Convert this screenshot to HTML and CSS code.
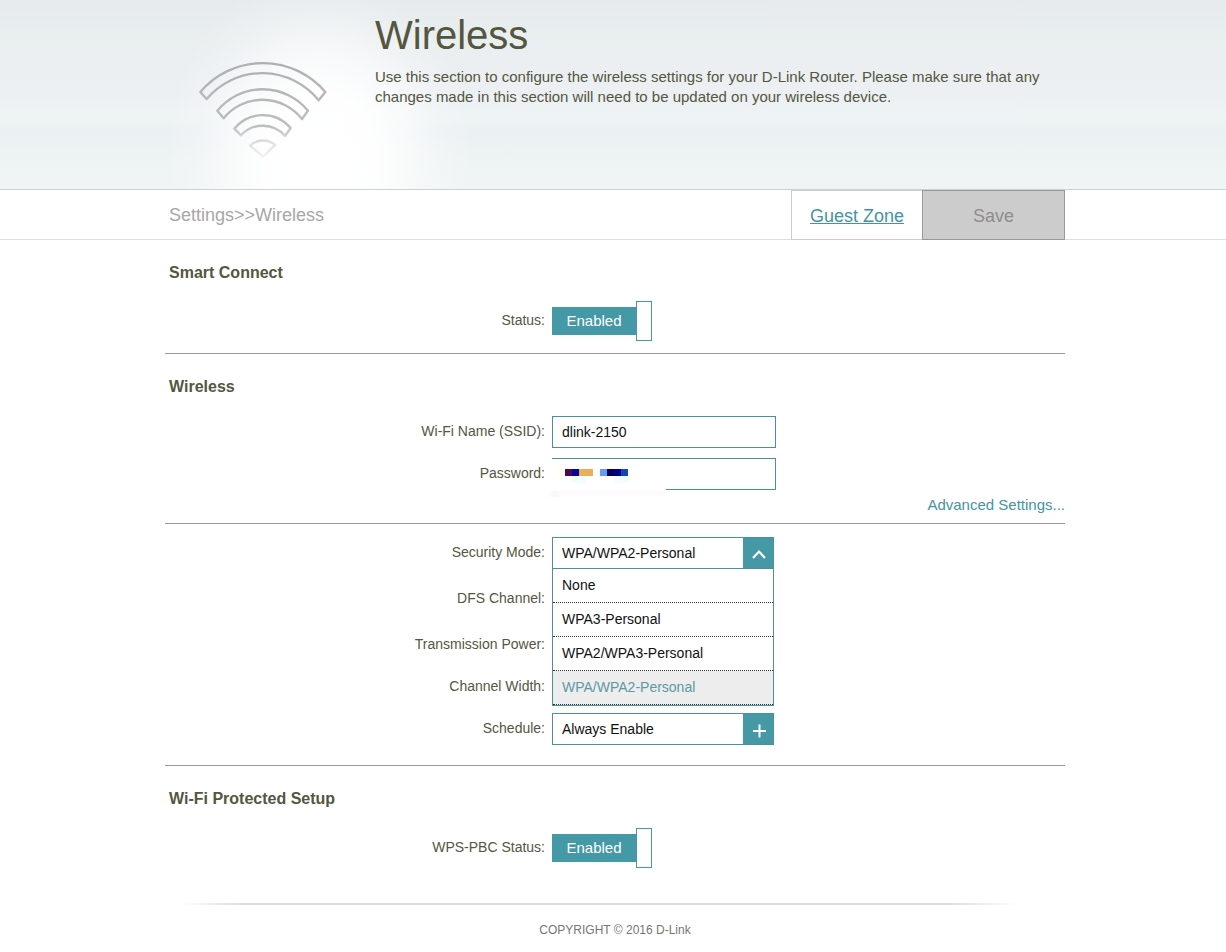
FILE: index.html
```html
<!DOCTYPE html>
<html lang="en">
<head>
<meta charset="utf-8">
<meta name="viewport" content="width=device-width, initial-scale=1">
<title>Wireless</title>
<link rel="stylesheet" href="styles.css">
</head>
<body>
<header class="banner">
  <div class="wrap banner-inner">
    <div class="banner-icon">
      <svg class="wifi" viewBox="0 0 510 360" aria-hidden="true">
        <defs>
          <linearGradient id="fade" gradientUnits="userSpaceOnUse" x1="0" y1="40" x2="0" y2="325">
            <stop offset="0" stop-color="#b0b0b2"/>
            <stop offset="0.65" stop-color="#bcbcbc"/>
            <stop offset="0.82" stop-color="#dcdcdc"/>
            <stop offset="1" stop-color="#f4f4f4"/>
          </linearGradient>
        </defs>
        <g fill="none" stroke="url(#fade)" stroke-width="7" stroke-linejoin="round">
          <path d="M61 126A246 246 0 0 1 436 126L416 151A217 217 0 0 0 80 147Z"/>
          <path d="M112 182A176 176 0 0 1 384 182L366 207A150 150 0 0 0 131 205Z"/>
          <path d="M163 236A110 110 0 0 1 332 234L315 258A88 88 0 0 0 183 256Z"/>
          <path d="M210 287A56 56 0 0 1 285 285L250 320Z"/>
        </g>
      </svg>
    </div>
    <div class="banner-text">
      <h1>Wireless</h1>
      <p>Use this section to configure the wireless settings for your D-Link Router. Please make sure that any changes made in this section will need to be updated on your wireless device.</p>
    </div>
  </div>
</header>

<nav class="toolbar">
  <div class="wrap toolbar-inner">
    <span class="crumbs">Settings&gt;&gt;Wireless</span>
    <a class="guest" href="#guest">Guest Zone</a>
    <button class="save" type="button" disabled>Save</button>
  </div>
</nav>

<main class="wrap">
  <section class="group">
    <h2>Smart Connect</h2>
    <div class="row">
      <label for="smart">Status:</label>
      <span class="toggle"><input id="smart" type="checkbox" checked><span class="face">Enabled</span><span class="knob"></span></span>
    </div>
  </section>

  <section class="group wireless">
    <h2>Wireless</h2>
    <div class="row">
      <label for="ssid">Wi-Fi Name (SSID):</label>
      <input class="text" id="ssid" type="text" value="dlink-2150">
    </div>
    <div class="row">
      <label for="password">Password:</label>
      <span class="field">
        <input class="text" id="password" type="text">
        <svg class="mask" viewBox="0 0 115 38" shape-rendering="crispEdges" aria-hidden="true">
          <rect width="115" height="38" fill="#fff"/>
          <rect x="0" y="32" width="115" height="5" fill="#fefbff"/>
          <rect x="0" y="32" width="7" height="6" fill="#fbf6ff"/>
          <rect x="7" y="10" width="7" height="7" fill="#fffff0"/>
          <rect x="21" y="17" width="14" height="7" fill="#f0fffd"/>
          <rect x="63" y="17" width="14" height="7" fill="#f0fffd"/>
          <rect x="14" y="10" width="7" height="7" fill="#4a0a4c"/>
          <rect x="21" y="10" width="7" height="7" fill="#06069a"/>
          <rect x="28" y="10" width="14" height="7" fill="#e9b05c"/>
          <rect x="49" y="10" width="7" height="7" fill="#639aff"/>
          <rect x="56" y="10" width="7" height="7" fill="#080050"/>
          <rect x="63" y="10" width="7" height="7" fill="#000088"/>
          <rect x="70" y="10" width="7" height="7" fill="#0f48b4"/>
        </svg>
      </span>
    </div>
    <a class="advanced" href="#advanced">Advanced Settings...</a>
  </section>

  <section class="group options">
    <div class="row">
      <label for="security">Security Mode:</label>
      <span class="field">
        <select class="drop" id="security"><option>WPA/WPA2-Personal</option></select>
        <span class="drop-icon"><svg viewBox="0 0 30 30" aria-hidden="true"><path d="M10 20L16 13.500L22 20" fill="none" stroke="#fff" stroke-width="2.200"/></svg></span>
        <ul class="menu" role="listbox" aria-label="Security Mode">
          <li role="option">None</li>
          <li role="option">WPA3-Personal</li>
          <li role="option">WPA2/WPA3-Personal</li>
          <li role="option" class="current" aria-selected="true">WPA/WPA2-Personal</li>
        </ul>
      </span>
    </div>
    <div class="row">
      <label for="dfs">DFS Channel:</label>
      <span class="toggle"><input id="dfs" type="checkbox"><span class="face"></span><span class="knob"></span></span>
    </div>
    <div class="row">
      <label for="power">Transmission Power:</label>
      <select class="drop" id="power"></select>
    </div>
    <div class="row">
      <label for="width">Channel Width:</label>
      <select class="drop" id="width"></select>
    </div>
    <div class="row">
      <label for="schedule">Schedule:</label>
      <span class="field">
        <select class="drop" id="schedule"><option>Always Enable</option></select>
        <span class="drop-icon"><svg viewBox="0 0 30 30" aria-hidden="true"><path d="M10 17H23M16.500 10.500V23.500" fill="none" stroke="#fff" stroke-width="2"/></svg></span>
      </span>
    </div>
  </section>

  <section class="group last">
    <h2>Wi-Fi Protected Setup</h2>
    <div class="row">
      <label for="wps">WPS-PBC Status:</label>
      <span class="toggle"><input id="wps" type="checkbox" checked><span class="face">Enabled</span><span class="knob"></span></span>
    </div>
  </section>
</main>

<footer class="wrap footer">COPYRIGHT © 2016 D-Link</footer>
</body>
</html>
```
FILE: styles.css
```css
* {
  box-sizing: border-box;
}

body {
  margin: 0;
  background: #fff;
  color: #54563f;
  font: 14px/20px "Liberation Sans", Arial, sans-serif;
}

h1,
h2,
p {
  margin: 0;
}

.wrap {
  max-width: 904px;
  margin: 0 auto;
  padding-left: 4px;
}

.banner {
  border-bottom: 1px solid #ccd2d4;
  background: linear-gradient(#e6eaed, #e9eeef 20%, #ebeff2 35%, #ecf0f3 50%, #eef3f4 62%, #ebf0f3 70%, #eef3f3 85%, #eff4f4);
}

.banner-inner {
  display: flex;
  min-height: 189px;
  background: radial-gradient(ellipse 155px 190px at 158px 160px, #fff, #fffffff2 35%, #ffffff99 58%, #ffffff33 80%, #fff0);
}

.banner-icon {
  flex: 0 0 210px;
  padding: 50px 0 0 15px;
}

.wifi {
  display: block;
  width: 170px;
  height: 120px;
}

.banner-text {
  padding-top: 11px;
  font-size: 15px;
}

h1 {
  margin-bottom: 8px;
  font-size: 40px;
  font-weight: 400;
  line-height: 48px;
}

.toolbar {
  border-bottom: 1px solid #dedede;
  font-size: 18px;
}

.toolbar-inner {
  display: flex;
  height: 49px;
}

.crumbs {
  flex: 1;
  padding-left: 4px;
  color: #a7a7a7;
  line-height: 50px;
}

.guest {
  width: 131px;
  margin-bottom: -1px;
  border: 1px solid #ccc;
  border-right: 0;
  color: #4494a2;
  line-height: 50px;
  text-align: center;
}

.save {
  width: 143px;
  margin-bottom: -1px;
  padding: 2px 0 0;
  border: 1px solid #999;
  background: #ccc;
  color: #8e8e8e;
  font: inherit;
}

.group {
  padding: 22px 0 7px;
  border-bottom: 1px solid #999;
}

.options {
  padding: 8px 0 15px;
}

.last {
  border: 0;
}

h2 {
  margin-bottom: 13px;
  padding-left: 4px;
  font-size: 16px;
  line-height: 22px;
}

.group:first-child h2 {
  margin-bottom: 12px;
}

.row {
  display: grid;
  grid-template-columns: 380px 1fr;
  column-gap: 7px;
  align-items: center;
  justify-items: start;
  padding: 5px 0;
}

.row label {
  justify-self: end;
  padding-bottom: 2px;
}

.field,
.toggle {
  display: flex;
  position: relative;
}

.toggle {
  align-items: center;
  width: 100px;
  height: 40px;
}

.toggle input {
  position: absolute;
  inset: 0;
  width: 100%;
  height: 100%;
  margin: 0;
  opacity: 0;
}

.face {
  flex: 1;
  height: 28px;
  background: #4598a6;
  color: #fff;
  font-size: 15px;
  line-height: 28px;
  text-align: center;
}

.knob {
  width: 16px;
  height: 40px;
  border: 1px solid #4598a6;
  background: #fff;
}

.text,
.drop {
  height: 32px;
  padding: 0 9px;
  border: 1px solid #4a919d;
  border-radius: 0;
  background: #fff;
  color: #111;
  font: inherit;
}

.text {
  width: 224px;
}

.mask {
  position: absolute;
  top: 1px;
  left: -1px;
  width: 115px;
  height: 38px;
}

.drop {
  width: 222px;
  appearance: none;
}

.drop-icon {
  position: absolute;
  top: 1px;
  right: 1px;
  width: 30px;
  height: 30px;
  background: #4598a6;
  pointer-events: none;
}

.drop-icon svg {
  display: block;
}

.menu {
  position: absolute;
  z-index: 1;
  top: 31px;
  left: 0;
  width: 222px;
  margin: 0;
  padding: 0;
  border: 1px solid #4a919d;
  background: #fff;
  color: #111;
  list-style: none;
}

.menu li {
  height: 34px;
  padding: 0 9px;
  border-bottom: 1px dotted #333;
  line-height: 33px;
}

.menu .current {
  background: #ededed;
  color: #5b9aa4;
}

.advanced {
  display: block;
  padding-bottom: 1px;
  color: #4494a2;
  font-size: 15px;
  line-height: 20px;
  text-align: right;
  text-decoration: none;
}

.footer {
  margin-top: 23px;
  padding-top: 17px;
  background: linear-gradient(90deg, #fff 2%, #ddd 9%, #ddd 87%, #fff 95%) top / 100% 2px no-repeat;
  color: #767676;
  font-size: 12px;
  text-align: center;
}
```
